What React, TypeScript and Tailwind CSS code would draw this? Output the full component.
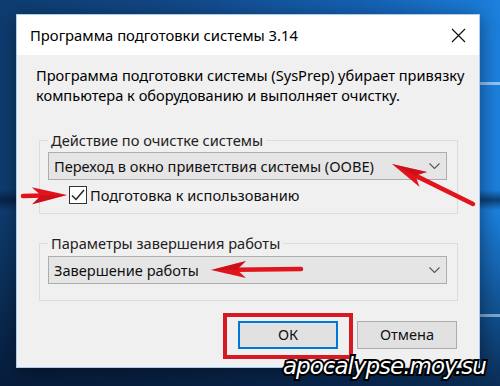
import React from 'react';

const ui = { fontFamily: '"Noto Sans", "Open Sans", sans-serif' };

interface ArrowProps {
  x1: number;
  y1: number;
  x2: number;
  y2: number;
}

// red annotation arrow, tail (x1,y1) -> tip (x2,y2)
const Arrow: React.FC<ArrowProps> = ({ x1, y1, x2, y2 }) => {
  const len = Math.hypot(x2 - x1, y2 - y1);
  const angle = (Math.atan2(y2 - y1, x2 - x1) * 180) / Math.PI;
  return (
    <g transform={`translate(${x2} ${y2}) rotate(${angle})`}>
      <path d={`M${-len} 0 L-24 0`} stroke="#e3131c" strokeWidth={4.5} strokeLinecap="round" />
      <path d="M0 0 L-35 -8.5 L-26 0 L-35 8.5 Z" fill="#e3131c" />
      <path d="M0 0 L-26 0 L-35 8.5 Z" fill="#b50d15" opacity={0.5} />
    </g>
  );
};

const Chevron = () => (
  <svg width="11" height="7" viewBox="0 0 11 7" className="shrink-0">
    <polyline points="0.5,0.5 5.5,5.5 10.5,0.5" fill="none" stroke="#555" strokeWidth="1.1" />
  </svg>
);

const Combo: React.FC<{ text: string }> = ({ text }) => (
  <div className="ml-[8px] w-[399px] h-[28px] bg-[#e5e5e5] border border-[#adadad] flex items-center justify-between pl-[5px] pr-[6px]">
    <span className="text-[14.6px] leading-[20px] text-[#111]">{text}</span>
    <Chevron />
  </div>
);

export default function App() {
  return (
    <div
      className="relative w-[500px] h-[386px] overflow-hidden pt-[14px] pl-[16px] bg-[linear-gradient(180deg,rgba(0,0,0,0)_0px,rgba(0,0,0,0)_190px,rgba(2,14,36,0.55)_200px,rgba(0,0,0,0)_210px),linear-gradient(180deg,rgba(0,0,0,0)_55%,rgba(4,18,42,0.75)_100%),linear-gradient(90deg,#0e3c70_0%,#124887_35%,#1563b6_75%,#1c80dc_100%)]"
      style={ui}
    >
      {/* light streaks of the wallpaper on the right */}
      <div className="absolute right-0 top-[82px] w-[30px] h-[3px] bg-[#bfe0ff] opacity-70" />
      <div className="absolute right-0 top-[314px] w-[30px] h-[3px] bg-[#bfe0ff] opacity-60" />

      {/* dialog window */}
      <div className="relative w-[464px] h-[354px] border border-[#a9cdee] bg-[#f0f0f0] flex flex-col shadow-[0_4px_18px_rgba(0,0,0,0.45)]">
        <div className="h-[40px] bg-white flex items-center justify-between pl-[13px] pr-[13px]">
          <span className="text-[14.8px] text-black leading-[22px]">Программа подготовки системы 3.14</span>
          <svg width="15" height="15" viewBox="0 0 15 15">
            <path d="M1 1 L14 14 M14 1 L1 14" stroke="#111" strokeWidth="1.2" />
          </svg>
        </div>

        <div className="flex-1 pl-[19px] pt-[10px] text-black">
          <p className="text-[14.6px] leading-[20px]">
            Программа подготовки системы (SysPrep) убирает привязку
            <br />
            компьютера к оборудованию и выполняет очистку.
          </p>

          <fieldset className="mt-[25px] ml-[3px] w-[419px] border border-[#dcdcdc] pt-[2px] pb-[9px]">
            <legend className="ml-[8px] px-[3px] text-[14.6px] leading-[20px] text-[#222]">Действие по очистке системы</legend>
            <Combo text="Переход в окно приветствия системы (OOBE)" />
            <div className="mt-[6px] ml-[29px] flex items-center gap-[3px] h-[18px]">
              <div className="w-[18px] h-[18px] bg-white border border-[#333] flex items-center justify-center">
                <svg width="14" height="12" viewBox="0 0 14 12">
                  <polyline points="1,6.5 5,10.5 13,1" fill="none" stroke="#222" strokeWidth="1.5" />
                </svg>
              </div>
              <span className="text-[14.6px] leading-[20px] text-[#111]">Подготовка к использованию</span>
            </div>
          </fieldset>

          <fieldset className="mt-[19px] ml-[3px] w-[419px] border border-[#dcdcdc] pt-[3px] pb-[16px]">
            <legend className="ml-[8px] px-[3px] text-[14.6px] leading-[20px] text-[#222]">Параметры завершения работы</legend>
            <Combo text="Завершение работы" />
          </fieldset>

          <div className="mt-[20px] pl-[202px] flex gap-[19px]">
            <div className="w-[100px] h-[28px] bg-[#e1e1e1] border-2 border-[#0078d7] flex items-center justify-center text-[14.6px] text-[#111]">
              ОК
            </div>
            <div className="w-[100px] h-[28px] bg-[#e1e1e1] border border-[#adadad] flex items-center justify-center text-[14.6px] text-[#111]">
              Отмена
            </div>
          </div>
        </div>
      </div>

      {/* red frame round the OK button */}
      <div className="absolute left-[223px] top-[313px] w-[130px] h-[46px] border-4 border-[#d51a24]" />

      {/* annotation arrows */}
      <svg className="absolute left-0 top-0 pointer-events-none" width="500" height="386">
        <Arrow x1={473} y1={204} x2={392} y2={164} />
        <Arrow x1={23} y1={196} x2={67} y2={195} />
        <Arrow x1={301} y1={269} x2={211} y2={270} />
      </svg>

      {/* watermark */}
      <div
        className="absolute left-[283px] top-[351px] text-[23px] leading-[30px] italic tracking-[-1px] text-white [-webkit-text-stroke:4px_#000] [paint-order:stroke_fill]"
        style={{ fontFamily: '"DejaVu Sans", sans-serif' }}
      >
        apocalypse.moy.su
      </div>
    </div>
  );
}
